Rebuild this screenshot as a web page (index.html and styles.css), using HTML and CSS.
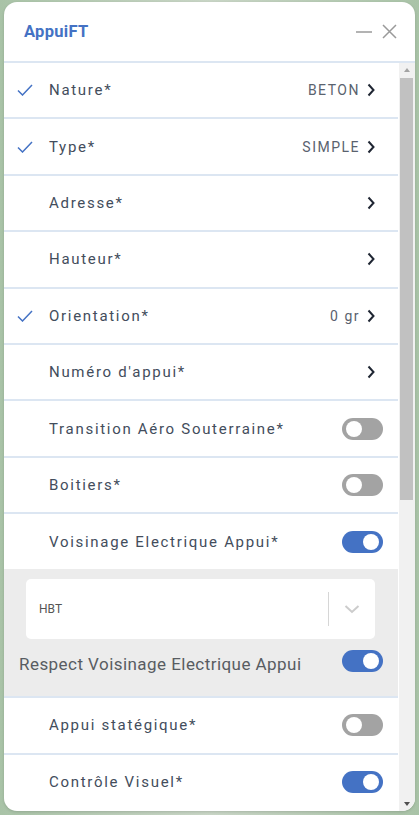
FILE: index.html
```html
<!DOCTYPE html>
<html lang="fr">
<head>
  <meta charset="UTF-8">
  <meta name="viewport" content="width=device-width, initial-scale=1.0">
  <title>AppuiFT</title>
  <link rel="stylesheet" href="styles.css">
</head>
<body>
  <div class="panel">
    <header class="panel-header">
      <h1>AppuiFT</h1>
      <div class="header-actions">
        <svg width="16" height="14" viewBox="0 0 16 14"><path d="M0 7h16" stroke="#9a9a9a" stroke-width="1.6"/></svg>
        <svg width="15" height="15" viewBox="0 0 15 15"><path d="M1 1l13 13M14 1L1 14" stroke="#9a9a9a" stroke-width="1.5"/></svg>
      </div>
    </header>

    <div class="panel-body">
      <div class="list">
        <div class="row">
          <span class="check"><svg width="16" height="12" viewBox="0 0 16 12"><path d="M1 6.5l4.5 4.5L15 1" fill="none" stroke="#4472c4" stroke-width="1.5"/></svg></span>
          <span class="label">Nature*</span>
          <span class="value">BETON</span>
          <svg class="chevron" width="8" height="14" viewBox="0 0 8 14"><path d="M1.5 1.5L6.5 7l-5 5.5" fill="none" stroke="#1f2633" stroke-width="2"/></svg>
        </div>
        <div class="row">
          <span class="check"><svg width="16" height="12" viewBox="0 0 16 12"><path d="M1 6.5l4.5 4.5L15 1" fill="none" stroke="#4472c4" stroke-width="1.5"/></svg></span>
          <span class="label">Type*</span>
          <span class="value">SIMPLE</span>
          <svg class="chevron" width="8" height="14" viewBox="0 0 8 14"><path d="M1.5 1.5L6.5 7l-5 5.5" fill="none" stroke="#1f2633" stroke-width="2"/></svg>
        </div>
        <div class="row">
          <span class="check"></span>
          <span class="label">Adresse*</span>
          <span class="value"></span>
          <svg class="chevron" width="8" height="14" viewBox="0 0 8 14"><path d="M1.5 1.5L6.5 7l-5 5.5" fill="none" stroke="#1f2633" stroke-width="2"/></svg>
        </div>
        <div class="row">
          <span class="check"></span>
          <span class="label">Hauteur*</span>
          <span class="value"></span>
          <svg class="chevron" width="8" height="14" viewBox="0 0 8 14"><path d="M1.5 1.5L6.5 7l-5 5.5" fill="none" stroke="#1f2633" stroke-width="2"/></svg>
        </div>
        <div class="row">
          <span class="check"><svg width="16" height="12" viewBox="0 0 16 12"><path d="M1 6.5l4.5 4.5L15 1" fill="none" stroke="#4472c4" stroke-width="1.5"/></svg></span>
          <span class="label">Orientation*</span>
          <span class="value">0 gr</span>
          <svg class="chevron" width="8" height="14" viewBox="0 0 8 14"><path d="M1.5 1.5L6.5 7l-5 5.5" fill="none" stroke="#1f2633" stroke-width="2"/></svg>
        </div>
        <div class="row">
          <span class="check"></span>
          <span class="label">Numéro d'appui*</span>
          <span class="value"></span>
          <svg class="chevron" width="8" height="14" viewBox="0 0 8 14"><path d="M1.5 1.5L6.5 7l-5 5.5" fill="none" stroke="#1f2633" stroke-width="2"/></svg>
        </div>
        <div class="row">
          <span class="check"></span>
          <span class="label">Transition Aéro Souterraine*</span>
          <span class="toggle"></span>
        </div>
        <div class="row">
          <span class="check"></span>
          <span class="label">Boitiers*</span>
          <span class="toggle"></span>
        </div>
        <div class="row row-open">
          <span class="check"></span>
          <span class="label">Voisinage Electrique Appui*</span>
          <span class="toggle on"></span>
        </div>

        <div class="sub-section">
          <div class="select">
            <span class="select-value">HBT</span>
            <span class="select-divider"></span>
            <svg class="select-arrow" width="16" height="10" viewBox="0 0 16 10"><path d="M1.5 2l6.5 6 6.5-6" fill="none" stroke="#cccccc" stroke-width="2"/></svg>
          </div>
          <div class="sub-row">
            <span class="sub-label">Respect Voisinage Electrique Appui</span>
            <span class="toggle on"></span>
          </div>
        </div>

        <div class="row">
          <span class="check"></span>
          <span class="label">Appui statégique*</span>
          <span class="toggle"></span>
        </div>
        <div class="row row-last">
          <span class="check"></span>
          <span class="label">Contrôle Visuel*</span>
          <span class="toggle on"></span>
        </div>
      </div>

      <div class="scrollbar">
        <span class="arrow arrow-up"></span>
        <div class="thumb"></div>
        <span class="arrow arrow-down"></span>
      </div>
    </div>
  </div>
</body>
</html>
```

FILE: styles.css
```css
body {
  margin: 0;
  padding: 2px 4px 4px 4px;
  background: linear-gradient(90deg, #a9c3a7, #c9d6c6 50%, #a9c3a7);
  font-family: Roboto, "Liberation Sans", sans-serif;
  height: 815px;
  box-sizing: border-box;
}

.panel {
  width: 411px;
  height: 809px;
  background: #ffffff;
  border-radius: 13px;
  overflow: hidden;
  display: flex;
  flex-direction: column;
  box-shadow: 0 1px 3px rgba(0, 0, 0, 0.15);
}

.panel-header {
  height: 59px;
  flex-shrink: 0;
  display: flex;
  align-items: center;
  justify-content: space-between;
  padding: 0 18px 0 20px;
  border-bottom: 2px solid #dce6f2;
}

.panel-header h1 {
  margin: 0;
  font-size: 16.5px;
  font-weight: 700;
  color: #4472c4;
  letter-spacing: 0.3px;
}

.header-actions {
  display: flex;
  align-items: center;
  gap: 10px;
}

.header-actions svg {
  display: block;
}

.panel-body {
  flex: 1;
  display: flex;
  min-height: 0;
}

.list {
  flex: 1;
  overflow: hidden;
}

.row {
  height: 54.4px;
  display: flex;
  align-items: center;
  padding: 0 15px 0 13px;
  border-bottom: 2px solid #dce6f2;
}

.row-open {
  border-bottom: none;
  height: 55px;
}

.row-last {
  border-bottom: none;
}

.check {
  width: 16px;
  height: 12px;
  margin-right: 16px;
  flex-shrink: 0;
}

.check svg {
  display: block;
}

.label {
  flex: 1;
  font-size: 15px;
  color: #434d5c;
  letter-spacing: 1.7px;
  white-space: nowrap;
}

.value {
  font-size: 14px;
  color: #5a626e;
  letter-spacing: 1.5px;
  margin-right: 7px;
}

.chevron {
  display: block;
  margin-right: 8px;
}

.toggle {
  position: relative;
  width: 41px;
  height: 22px;
  border-radius: 11px;
  background: #a3a3a3;
  flex-shrink: 0;
}

.toggle::after {
  content: "";
  position: absolute;
  top: 3px;
  left: 4px;
  width: 16px;
  height: 16px;
  border-radius: 50%;
  background: #ffffff;
}

.toggle.on {
  background: #4472c4;
}

.toggle.on::after {
  left: 21px;
}

.sub-section {
  background: #ececec;
  padding: 10px 15px 13px 15px;
  border-bottom: 2px solid #dce6f2;
}

.select {
  height: 60px;
  margin: 0 8px 0 7px;
  background: #ffffff;
  border-radius: 5px;
  display: flex;
  align-items: center;
  padding: 0 15px 0 13px;
}

.select-value {
  flex: 1;
  font-size: 12px;
  color: #555555;
}

.select-divider {
  width: 1px;
  height: 34px;
  background: #d6d6d6;
  margin-right: 15px;
}

.select-arrow {
  display: block;
}

.sub-row {
  display: flex;
  align-items: center;
  justify-content: space-between;
  height: 44px;
}

.sub-label {
  font-size: 17px;
  color: #585c62;
  letter-spacing: 0.45px;
  margin-top: 5px;
}

.scrollbar {
  width: 16px;
  margin-left: 1px;
  background: #f1f1f1;
  position: relative;
  flex-shrink: 0;
}

.thumb {
  position: absolute;
  top: 15px;
  left: 1px;
  width: 13px;
  height: 422px;
  background: #c1c1c1;
}

.arrow {
  position: absolute;
  left: 5px;
  width: 0;
  height: 0;
  border-left: 3.5px solid transparent;
  border-right: 3.5px solid transparent;
}

.arrow-up {
  top: 5px;
  border-bottom: 4px solid #a3a3a3;
}

.arrow-down {
  bottom: 5px;
  border-top: 4px solid #505050;
}
```
